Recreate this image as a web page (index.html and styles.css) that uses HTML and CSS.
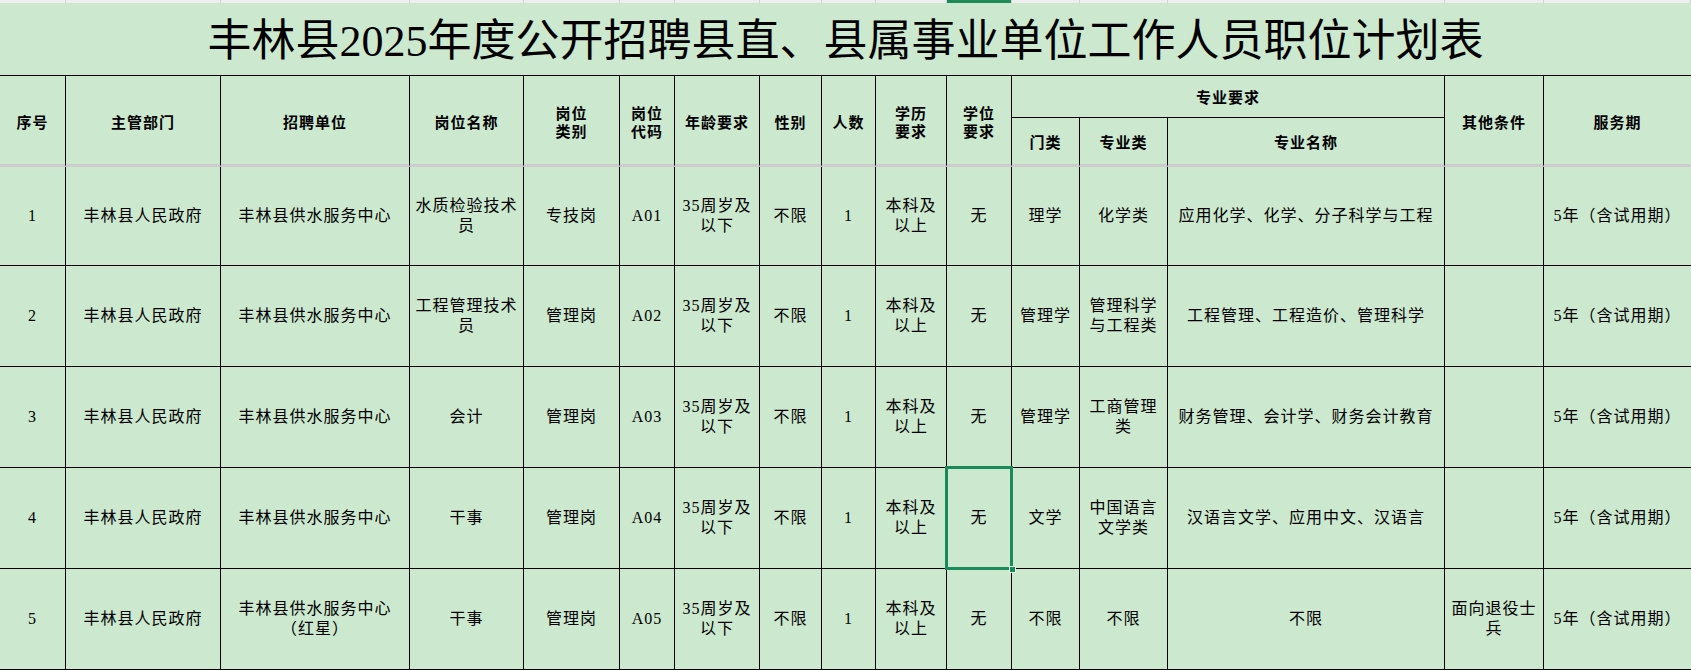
FILE: index.html
```html
<!DOCTYPE html>
<html lang="zh-CN">
<head>
<meta charset="utf-8">
<title>丰林县2025年度公开招聘县直、县属事业单位工作人员职位计划表</title>
<link rel="stylesheet" href="styles.css">
</head>
<body>
<div class="colbar">
  <span></span><span></span><span></span><span></span><span></span><span></span><span></span><span></span>
  <span></span><span></span><span class="active"></span><span></span><span></span><span></span><span></span><span></span>
</div>
<div class="sheet">
  <div class="title">丰林县2025年度公开招聘县直、县属事业单位工作人员职位计划表</div>

  <div class="cell head tall">序号</div>
  <div class="cell head tall">主管部门</div>
  <div class="cell head tall">招聘单位</div>
  <div class="cell head tall">岗位名称</div>
  <div class="cell head tall">岗位<br>类别</div>
  <div class="cell head tall">岗位<br>代码</div>
  <div class="cell head tall">年龄要求</div>
  <div class="cell head tall">性别</div>
  <div class="cell head tall">人数</div>
  <div class="cell head tall">学历<br>要求</div>
  <div class="cell head tall">学位<br>要求</div>
  <div class="cell head group">专业要求</div>
  <div class="cell head tall">其他条件</div>
  <div class="cell head tall last">服务期</div>
  <div class="cell head sub">门类</div>
  <div class="cell head sub">专业类</div>
  <div class="cell head sub">专业名称</div>

  <div class="cell">1</div>
  <div class="cell">丰林县人民政府</div>
  <div class="cell">丰林县供水服务中心</div>
  <div class="cell">水质检验技术<br>员</div>
  <div class="cell">专技岗</div>
  <div class="cell">A01</div>
  <div class="cell">35周岁及<br>以下</div>
  <div class="cell">不限</div>
  <div class="cell">1</div>
  <div class="cell">本科及<br>以上</div>
  <div class="cell">无</div>
  <div class="cell">理学</div>
  <div class="cell">化学类</div>
  <div class="cell">应用化学、化学、分子科学与工程</div>
  <div class="cell"></div>
  <div class="cell last">5年（含试用期）</div>

  <div class="cell">2</div>
  <div class="cell">丰林县人民政府</div>
  <div class="cell">丰林县供水服务中心</div>
  <div class="cell">工程管理技术<br>员</div>
  <div class="cell">管理岗</div>
  <div class="cell">A02</div>
  <div class="cell">35周岁及<br>以下</div>
  <div class="cell">不限</div>
  <div class="cell">1</div>
  <div class="cell">本科及<br>以上</div>
  <div class="cell">无</div>
  <div class="cell">管理学</div>
  <div class="cell">管理科学<br>与工程类</div>
  <div class="cell">工程管理、工程造价、管理科学</div>
  <div class="cell"></div>
  <div class="cell last">5年（含试用期）</div>

  <div class="cell">3</div>
  <div class="cell">丰林县人民政府</div>
  <div class="cell">丰林县供水服务中心</div>
  <div class="cell">会计</div>
  <div class="cell">管理岗</div>
  <div class="cell">A03</div>
  <div class="cell">35周岁及<br>以下</div>
  <div class="cell">不限</div>
  <div class="cell">1</div>
  <div class="cell">本科及<br>以上</div>
  <div class="cell">无</div>
  <div class="cell">管理学</div>
  <div class="cell">工商管理<br>类</div>
  <div class="cell">财务管理、会计学、财务会计教育</div>
  <div class="cell"></div>
  <div class="cell last">5年（含试用期）</div>

  <div class="cell">4</div>
  <div class="cell">丰林县人民政府</div>
  <div class="cell">丰林县供水服务中心</div>
  <div class="cell">干事</div>
  <div class="cell">管理岗</div>
  <div class="cell">A04</div>
  <div class="cell">35周岁及<br>以下</div>
  <div class="cell">不限</div>
  <div class="cell">1</div>
  <div class="cell">本科及<br>以上</div>
  <div class="cell selected">无</div>
  <div class="cell">文学</div>
  <div class="cell">中国语言<br>文学类</div>
  <div class="cell">汉语言文学、应用中文、汉语言</div>
  <div class="cell"></div>
  <div class="cell last">5年（含试用期）</div>

  <div class="cell">5</div>
  <div class="cell">丰林县人民政府</div>
  <div class="cell">丰林县供水服务中心<br>（红星）</div>
  <div class="cell">干事</div>
  <div class="cell">管理岗</div>
  <div class="cell">A05</div>
  <div class="cell">35周岁及<br>以下</div>
  <div class="cell">不限</div>
  <div class="cell">1</div>
  <div class="cell">本科及<br>以上</div>
  <div class="cell">无</div>
  <div class="cell">不限</div>
  <div class="cell">不限</div>
  <div class="cell">不限</div>
  <div class="cell">面向退役士<br>兵</div>
  <div class="cell last">5年（含试用期）</div>
</div>
</body>
</html>
```

FILE: styles.css
```css
html, body {
  margin: 0;
  padding: 0;
  background: #cce8cf;
}

body {
  width: 1691px;
  height: 670px;
  overflow: hidden;
  font-family: "Liberation Serif", "Noto Sans CJK SC", serif;
  color: #000;
}

.colbar,
.sheet {
  display: grid;
  grid-template-columns: 66px 155px 189px 114px 96px 55px 85px 62px 54px 71px 65px 68px 88px 277px 99px 147px;
}

.colbar {
  height: 3px;
  background: #eeeeee;
}

.colbar span {
  border-right: 1px solid #d2d2d2;
}

.colbar span.active {
  background: #1e8a5a;
}

.sheet {
  grid-template-rows: 73px 42px 49px 99px 101px 101px 101px 101px;
}

.title {
  grid-column: 1 / -1;
  display: flex;
  align-items: center;
  justify-content: center;
  padding-top: 6px;
  box-sizing: border-box;
  border-bottom: 1px solid #000;
  font-size: 44px;
  line-height: 1;
  font-weight: 400;
}

.cell {
  box-sizing: border-box;
  display: flex;
  align-items: center;
  justify-content: center;
  text-align: center;
  border-right: 1px solid #000;
  border-bottom: 1px solid #000;
  font-size: 16px;
  line-height: 20px;
  letter-spacing: 1px;
  white-space: nowrap;
}

.cell.last {
  border-right: none;
}

.head {
  font-weight: 700;
  font-size: 15px;
  line-height: 18px;
}

.head.tall {
  grid-row: span 2;
  border-bottom: 3px solid #cdcdcd;
  padding-top: 5px;
}

.head.group {
  grid-column: span 3;
  padding-top: 2px;
}

.head.sub {
  border-bottom: 3px solid #cdcdcd;
  padding-top: 3px;
}

.selected {
  position: relative;
}

.selected::after {
  content: "";
  position: absolute;
  left: -2px;
  top: -2px;
  right: -2px;
  bottom: -2px;
  border: 3px solid #1b8a5a;
}

.selected::before {
  content: "";
  position: absolute;
  right: -5px;
  bottom: -5px;
  width: 5px;
  height: 5px;
  background: #1b8a5a;
  border: 1px solid #e6f4ea;
  z-index: 1;
}
```
